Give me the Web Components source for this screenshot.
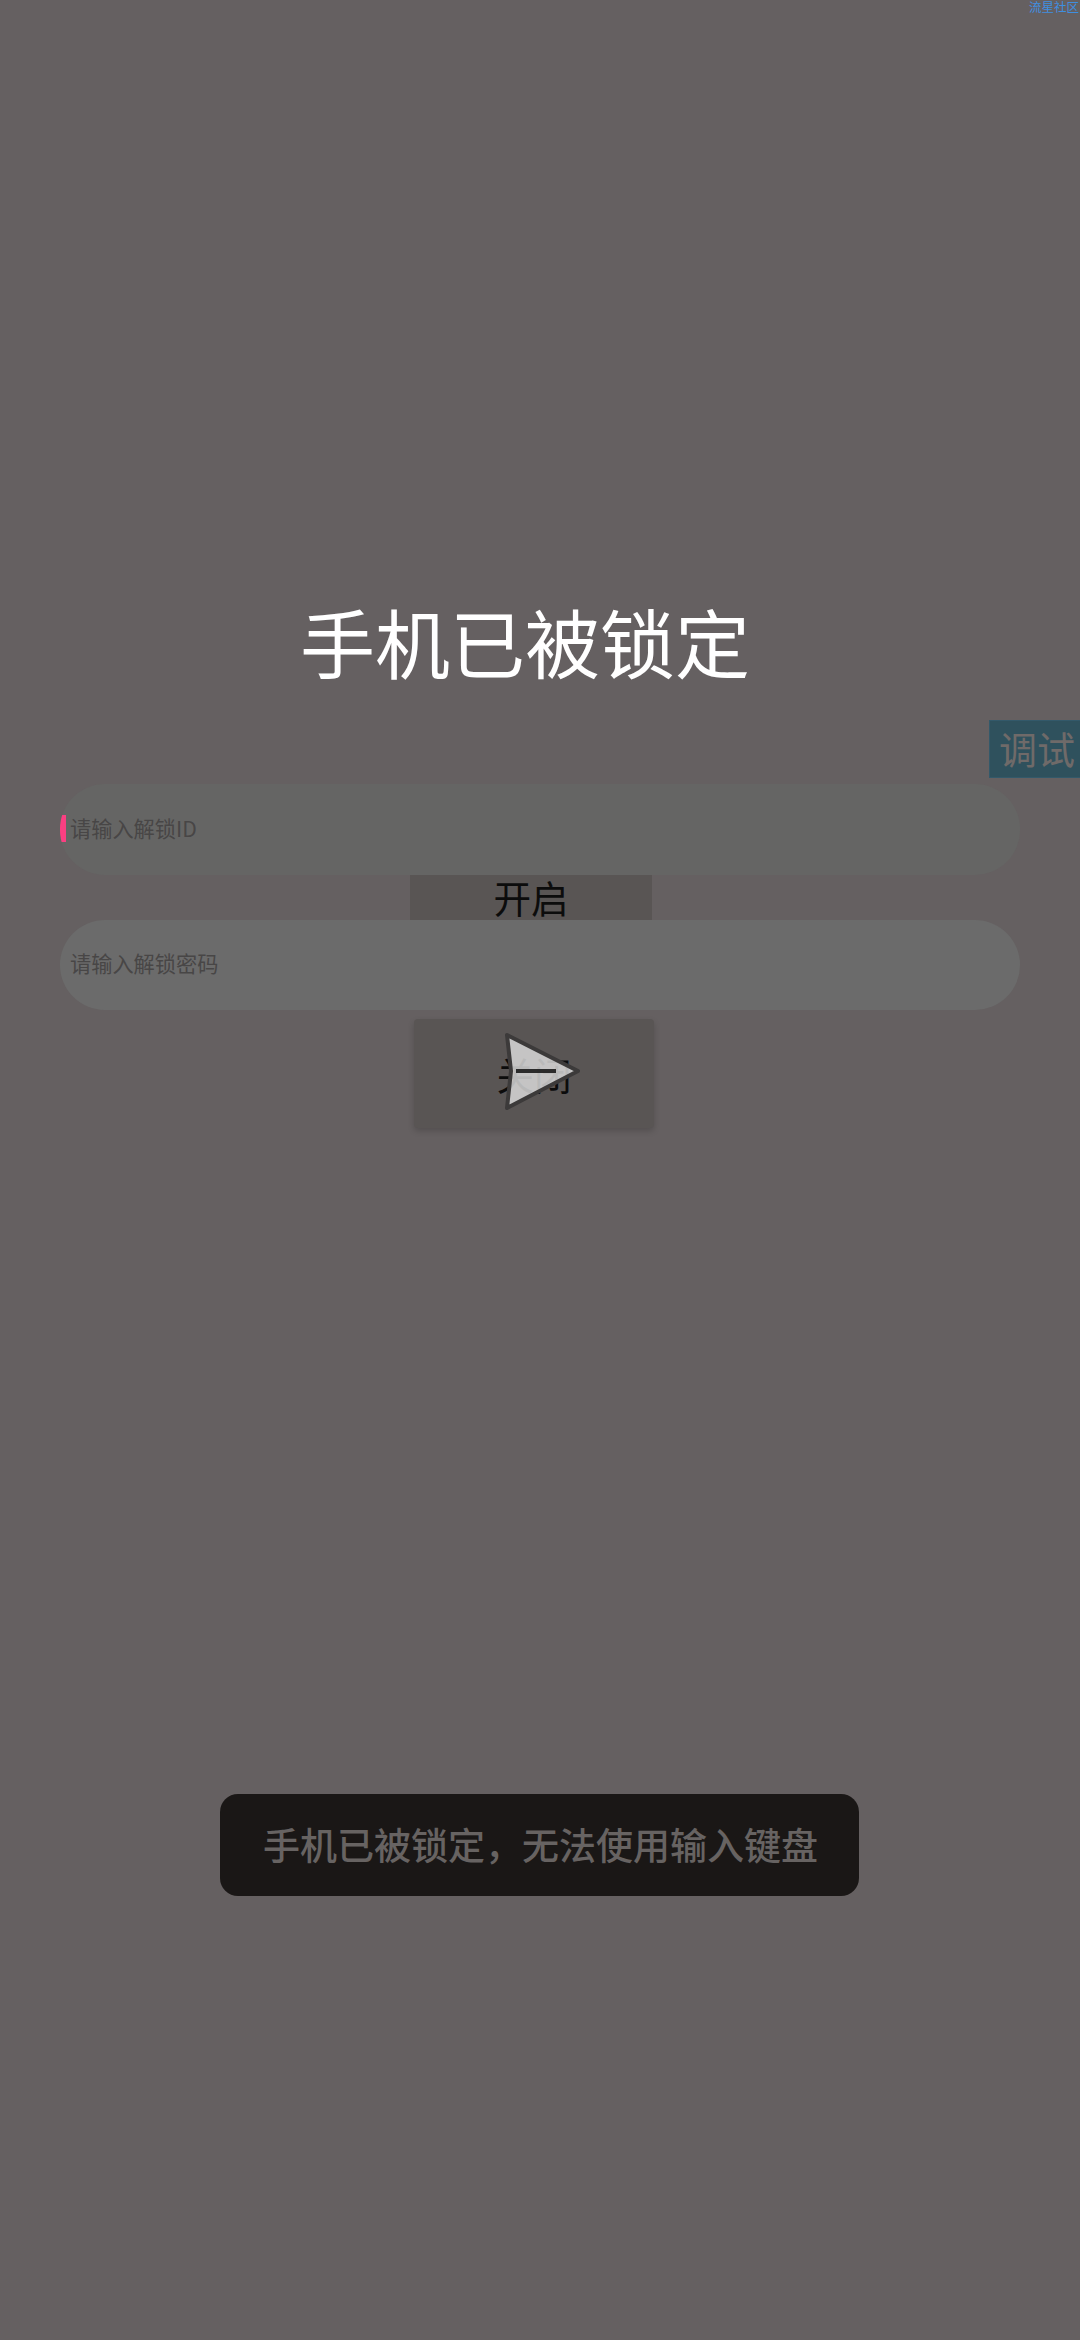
<!DOCTYPE html>
<html lang="zh">
<head>
<meta charset="utf-8">
<title>手机已被锁定</title>
<style>
	html, body {
		margin: 0;
		background: #656061;
		}
</style>
</head>
<body>
<lock-screen>
	<lock-title>手机已被锁定</lock-title>
	<lock-input caret>请输入解锁ID</lock-input>
	<lock-button kind="open">开启</lock-button>
	<lock-input light>请输入解锁密码</lock-input>
	<lock-button kind="close">关闭<send-arrow></send-arrow></lock-button>
	<debug-tab>调试</debug-tab>
	<corner-link>流星社区</corner-link>
	<toast-message>手机已被锁定，无法使用输入键盘</toast-message>
</lock-screen>

<script>
	const FONT = `"Noto Sans CJK SC", "Noto Sans", sans-serif`

	class BaseElement extends HTMLElement {
		constructor( css, html = "<slot></slot>" ) {
			super()
			let shadow = this.attachShadow({ mode: "open" })
			shadow.innerHTML = `<style>${css}</style>${html}`
			}
		}

	class LockScreen extends BaseElement {
		constructor() {
			super( `
				:host {
					display: flex;
					flex-direction: column;
					align-items: center;
					position: relative;
					box-sizing: border-box;
					width: 1080px;
					height: 2340px;
					padding-top: 590px;
					overflow: hidden;
					font-family: ${FONT};
					}` )
			}
		}

	class LockTitle extends BaseElement {
		constructor() {
			super( `
				:host {
					display: block;
					height: 194px;
					margin-right: 30px;
					font-size: 75px;
					line-height: 102px;
					color: #fff;
					white-space: nowrap;
					}` )
			}
		}

	class LockInput extends BaseElement {
		constructor() {
			super( `
				:host {
					display: flex;
					align-items: center;
					position: relative;
					box-sizing: border-box;
					flex: none;
					width: 960px;
					height: 91px;
					padding: 0 0 5px 10px;
					border-radius: 45px;
					overflow: hidden;
					background: #656564;
					color: #484646;
					font-size: 21.2px;
					}
				:host([light]) {
					height: 90px;
					background: #6b6b6b;
					}
				#caret {
					display: none;
					position: absolute;
					left: 0;
					top: 31px;
					width: 6px;
					height: 27px;
					background: #fb3f82;
					}
				:host([caret]) #caret {
					display: block;
					}`,
				`<div id="caret"></div><slot></slot>` )
			}
		}

	class LockButton extends BaseElement {
		constructor() {
			super( `
				:host {
					display: flex;
					align-items: center;
					justify-content: center;
					position: relative;
					box-sizing: border-box;
					flex: none;
					background: #595554;
					color: #0c0c0c;
					font-size: 37.6px;
					}
				:host([kind="open"]) {
					width: 242px;
					height: 45px;
					margin-right: 18px;
					padding-bottom: 2px;
					}
				:host([kind="close"]) {
					width: 240px;
					height: 109px;
					margin: 9px 0 0 -12px;
					border-radius: 4px;
					box-shadow: 0 3px 6px rgba(0,0,0,.18);
					}`,
				`<slot></slot>` )
			}
		}

	class SendArrow extends BaseElement {
		constructor() {
			super( `
				:host {
					display: block;
					position: absolute;
					left: 88px;
					top: 10px;
					width: 80px;
					height: 84px;
					}
				svg {
					display: block;
					filter: blur(.5px);
					}`,
				`<svg width="80" height="84" viewBox="0 0 80 84">
					<path d="M5 6 L76 42 L5 79 L9 42 Z" fill="#d8d8d8" fill-opacity=".85"
						stroke="#3c3a3a" stroke-width="4" stroke-linejoin="round"/>
					<path d="M14 42 H54" stroke="#1c1c1c" stroke-width="4" stroke-opacity=".9"/>
				</svg>` )
			}
		}

	class DebugTab extends BaseElement {
		constructor() {
			super( `
				:host {
					display: block;
					position: absolute;
					right: 0;
					top: 720px;
					box-sizing: border-box;
					width: 91px;
					height: 58px;
					padding-left: 9px;
					background: #2f515d;
					border: 1px solid #33596a;
					border-right: 0;
					color: #6f6a69;
					font-size: 38px;
					line-height: 54px;
					white-space: nowrap;
					}` )
			}
		}

	class CornerLink extends BaseElement {
		constructor() {
			super( `
				:host {
					display: block;
					position: absolute;
					right: 1px;
					top: 0;
					color: #3f8fe0;
					font-size: 12.5px;
					line-height: 13px;
					white-space: nowrap;
					}` )
			}
		}

	class ToastMessage extends BaseElement {
		constructor() {
			super( `
				:host {
					display: flex;
					align-items: center;
					justify-content: center;
					position: absolute;
					left: 220px;
					top: 1794px;
					box-sizing: border-box;
					width: 639px;
					height: 102px;
					padding: 0 0 2px 2px;
					border-radius: 18px;
					background: #1a1716;
					color: #676362;
					font-size: 37px;
					font-weight: 500;
					white-space: nowrap;
					}` )
			}
		}

	customElements.define( "lock-screen", LockScreen )
	customElements.define( "lock-title", LockTitle )
	customElements.define( "lock-input", LockInput )
	customElements.define( "lock-button", LockButton )
	customElements.define( "send-arrow", SendArrow )
	customElements.define( "debug-tab", DebugTab )
	customElements.define( "corner-link", CornerLink )
	customElements.define( "toast-message", ToastMessage )
</script>
</body>
</html>
